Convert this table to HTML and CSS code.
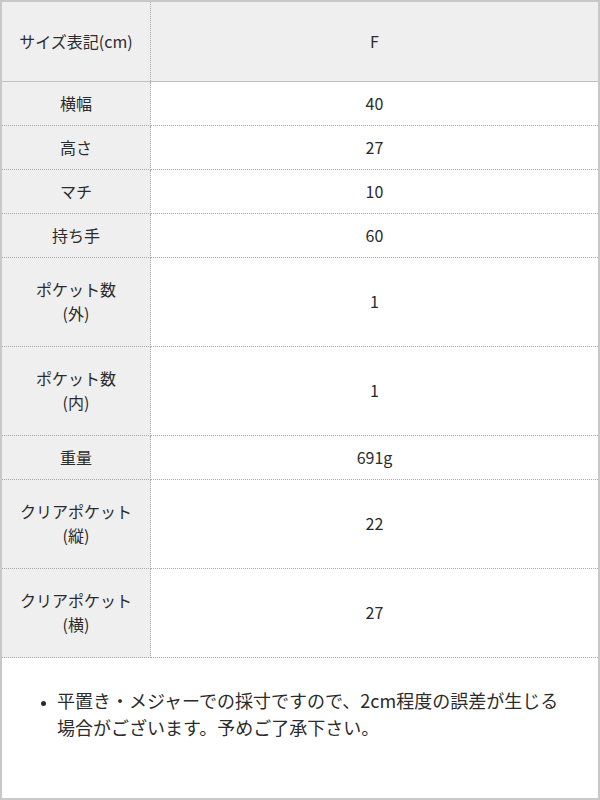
FILE: index.html
```html
<!DOCTYPE html>
<html lang="ja">
<head>
<meta charset="utf-8">
<link rel="stylesheet" href="styles.css">
</head>
<body>
<div class="frame">
  <table class="size-table">
    <tr class="head">
      <th>サイズ表記(cm)</th>
      <td>F</td>
    </tr>
    <tr><th>横幅</th><td>40</td></tr>
    <tr><th>高さ</th><td>27</td></tr>
    <tr><th>マチ</th><td>10</td></tr>
    <tr><th>持ち手</th><td>60</td></tr>
    <tr class="tall"><th>ポケット数<br>(外)</th><td>1</td></tr>
    <tr class="tall"><th>ポケット数<br>(内)</th><td>1</td></tr>
    <tr><th>重量</th><td>691g</td></tr>
    <tr class="tall"><th>クリアポケット<br>(縦)</th><td>22</td></tr>
    <tr class="tall"><th>クリアポケット<br>(横)</th><td>27</td></tr>
  </table>
  <ul class="notes">
    <li>平置き・メジャーでの採寸ですので、2cm程度の誤差が生じる<br>場合がございます。予めご了承下さい。</li>
  </ul>
</div>
</body>
</html>
```

FILE: styles.css
```css
html, body {
  margin: 0;
  padding: 0;
  background: #ffffff;
}
body {
  font-family: "Noto Sans CJK JP", "Noto Sans", sans-serif;
  color: #2b2b2b;
}
.frame {
  box-sizing: border-box;
  width: 600px;
  height: 800px;
  border: 2px solid #c8c8c8;
  background: #ffffff;
}
.size-table {
  width: 100%;
  border-collapse: collapse;
  font-size: 16px;
  line-height: 24px;
}
.size-table th,
.size-table td {
  text-align: center;
  font-weight: normal;
  padding: 9px 0 10px;
  border-bottom: 1px dotted #a8a8a8;
}
.size-table th {
  width: 148px;
  background: #efefef;
  border-right: 1px dotted #a8a8a8;
}
.size-table td {
  background: #ffffff;
}
.size-table .head th,
.size-table .head td {
  background: #efefef;
  padding: 27px 0 28px;
  border-bottom: 1px solid #c0c0c0;
}
.size-table .tall th,
.size-table .tall td {
  padding: 19px 0 21px;
}
.notes {
  margin: 29px 0 0;
  padding: 0 0 0 55px;
  font-size: 18px;
  line-height: 27px;
  list-style: disc;
}
.notes li::marker {
  font-size: 12px;
}
```
